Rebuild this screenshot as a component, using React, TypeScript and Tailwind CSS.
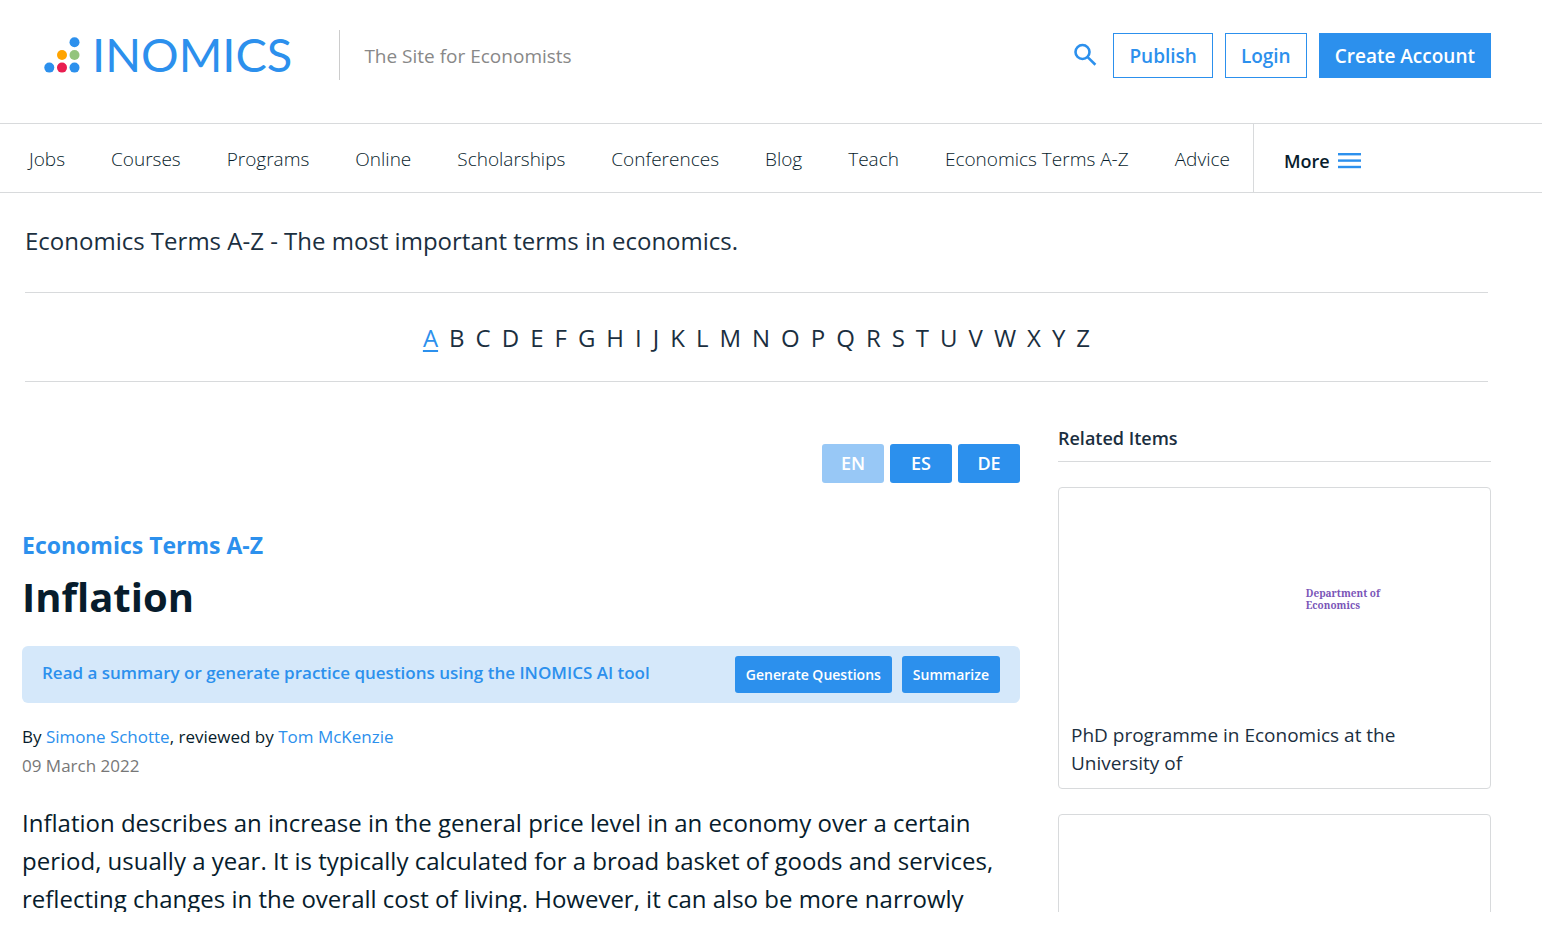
import { useState } from 'react';

const LogoDots = () => (
  <svg width="36" height="36" viewBox="0 0 36 36" aria-hidden="true">
    <circle cx="30.5" cy="5.3" r="5" fill="#2c90ed" />
    <circle cx="18" cy="18" r="5" fill="#ffa400" />
    <circle cx="30.5" cy="18" r="5" fill="#93c47d" />
    <circle cx="5.3" cy="30.6" r="5" fill="#2c90ed" />
    <circle cx="18" cy="30.6" r="5" fill="#e91e50" />
    <circle cx="30.5" cy="30.6" r="5" fill="#2c90ed" />
  </svg>
);

const SearchIcon = () => (
  <svg width="24" height="24" viewBox="0 0 24 24" fill="none" stroke="#2c90ed" strokeWidth="2.6">
    <circle cx="9.5" cy="9" r="7" />
    <path d="M14.4 13.9L22.4 21.7" />
  </svg>
);

const MenuIcon = () => (
  <svg width="23" height="16" viewBox="0 0 23 16" fill="#2c90ed">
    <rect width="23" height="2.4" y="0" />
    <rect width="23" height="2.4" y="6.4" />
    <rect width="23" height="2.4" y="12.8" />
  </svg>
);

const navLinks = [
  'Jobs',
  'Courses',
  'Programs',
  'Online',
  'Scholarships',
  'Conferences',
  'Blog',
  'Teach',
  'Economics Terms A-Z',
  'Advice',
];

const letters = 'ABCDEFGHIJKLMNOPQRSTUVWXYZ'.split('');
const languages = ['EN', 'ES', 'DE'];

function Header() {
  return (
    <header className="flex h-[123px] items-start justify-between pt-[30px] pr-[51px] pl-11">
      <div className="flex h-[50px] items-center">
        <a href="#" className="flex items-center gap-3" aria-label="INOMICS">
          <LogoDots />
          <span className="pb-[2px] font-[Lato] text-[47px] leading-[48px] text-[#2c90ed]">INOMICS</span>
        </a>
        <span className="ml-[47px] h-[50px] border-l border-[#cccccc] pl-6 text-[19px] leading-[52px] text-[#888888]">
          The Site for Economists
        </span>
      </div>
      <div className="flex h-[50px] items-center gap-3 text-[19px] font-semibold text-[#2c90ed]">
        <button type="button" aria-label="Search" className="mr-1">
          <SearchIcon />
        </button>
        <a href="#" className="flex h-[45px] items-center border border-[#2c90ed] px-[15px] pt-[2px]">
          Publish
        </a>
        <a href="#" className="flex h-[45px] items-center border border-[#2c90ed] px-[15px] pt-[2px]">
          Login
        </a>
        <a href="#" className="flex h-[45px] items-center border border-[#2c90ed] bg-[#2c90ed] px-[15px] pt-[2px] text-white">
          Create Account
        </a>
      </div>
    </header>
  );
}

function Navbar() {
  return (
    <nav className="flex h-[70px] border-y border-[#d8dadc]">
      <div className="flex items-center border-r border-[#d8dadc] pt-[2px] pl-[6px]">
        {navLinks.map((label) => (
          <a key={label} href="#" className="px-[23px] text-[19px] leading-7 font-light whitespace-nowrap text-[#071c2c]">
            {label}
          </a>
        ))}
      </div>
      <button type="button" className="flex items-center gap-2 pt-[6px] pl-[30px] text-[18px] font-semibold text-[#071c2c]">
        More
        <MenuIcon />
      </button>
    </nav>
  );
}

function LetterIndex() {
  const [active, setActive] = useState('A');

  return (
    <div className="mx-[3px] flex h-[90px] items-center justify-center gap-[11px] border-y border-[#d8dadc] pt-[2px] text-[24px] leading-9 text-[#1b2f3f]">
      {letters.map((letter) => (
        <a
          key={letter}
          href="#"
          onClick={() => setActive(letter)}
          className={letter === active ? 'text-[#2c90ed] underline decoration-2 underline-offset-3' : ''}
        >
          {letter}
        </a>
      ))}
    </div>
  );
}

function Article() {
  const [lang, setLang] = useState('EN');

  return (
    <article className="min-w-0 flex-1 pt-[62px]">
      <div className="flex justify-end gap-[6px]">
        {languages.map((code) => (
          <button
            key={code}
            type="button"
            onClick={() => setLang(code)}
            className={`h-[39px] w-[62px] rounded-[3px] text-[18px] font-semibold text-white ${
              code === lang ? 'bg-[#98c8f6]' : 'bg-[#2c90ed]'
            }`}
          >
            {code}
          </button>
        ))}
      </div>

      <a href="#" className="mt-11 block text-[23px] leading-9 font-bold text-[#2c90ed]">
        Economics Terms A-Z
      </a>
      <h1 className="mt-1 text-[40px] leading-[60px] font-bold text-[#071c2c]">Inflation</h1>

      <div className="mt-[19px] flex h-[57px] items-center justify-between rounded-[6px] bg-[#d5e8fa] px-5">
        <p className="pb-1 text-[17px] leading-6 font-semibold text-[#2c90ed]">
          Read a summary or generate practice questions using the INOMICS AI tool
        </p>
        <div className="flex gap-[10px] text-[14px] font-semibold text-white">
          <button type="button" className="h-[37px] rounded-[3px] bg-[#2c90ed] px-[11px]">
            Generate Questions
          </button>
          <button type="button" className="h-[37px] rounded-[3px] bg-[#2c90ed] px-[11px]">
            Summarize
          </button>
        </div>
      </div>

      <div className="mt-[19px] text-[17px] leading-[29px] text-[#071c2c]">
        <p>
          By <a href="#" className="text-[#2c90ed]">Simone Schotte</a>, reviewed by{' '}
          <a href="#" className="text-[#2c90ed]">Tom McKenzie</a>
        </p>
        <p className="text-[#777777]">09 March 2022</p>
      </div>

      <p className="mt-6 text-[24px] leading-[38px] text-[#071c2c]">
        Inflation describes an increase in the general price level in an economy over a certain
        <br />
        period, usually a year. It is typically calculated for a broad basket of goods and services,
        <br />
        reflecting changes in the overall cost of living. However, it can also be more narrowly
      </p>
    </article>
  );
}

function RelatedItems() {
  return (
    <aside className="w-[433px] shrink-0 pt-10">
      <h2 className="border-b border-[#d8dadc] pb-[7px] text-[18px] leading-8 font-semibold text-[#1b2f3f]">
        Related Items
      </h2>
      <a href="#" className="mt-[25px] block h-[302px] rounded-[4px] border border-[#d8dadc] text-[#1b2f3f]">
        <div className="flex h-[233px] items-start justify-end pt-[99px] pr-[110px]">
          <span className="font-['Noto_Serif','Liberation_Serif',serif] text-[10px] leading-3 font-bold text-[#7a55b8]">
            Department of
            <br />
            Economics
          </span>
        </div>
        <p className="px-3 text-[19px] leading-7">
          PhD programme in Economics at the
          <br />
          University of
        </p>
      </a>
      <a href="#" aria-label="Related item" className="mt-[25px] block h-[302px] rounded-[4px] border border-[#d8dadc]" />
    </aside>
  );
}

export default function App() {
  return (
    <div className="h-screen overflow-hidden bg-white pb-[21px] font-['Segoe_UI','Open_Sans',sans-serif]">
      <div className="h-full overflow-hidden">
        <Header />
        <Navbar />
        <main className="pr-[51px] pl-[22px]">
          <p className="mx-[3px] pt-[30px] pb-[33px] text-[24px] leading-9 text-[#1b2f3f]">
            Economics Terms A-Z - The most important terms in economics.
          </p>
          <LetterIndex />
          <div className="flex gap-[38px]">
            <Article />
            <RelatedItems />
          </div>
        </main>
      </div>
    </div>
  );
}
